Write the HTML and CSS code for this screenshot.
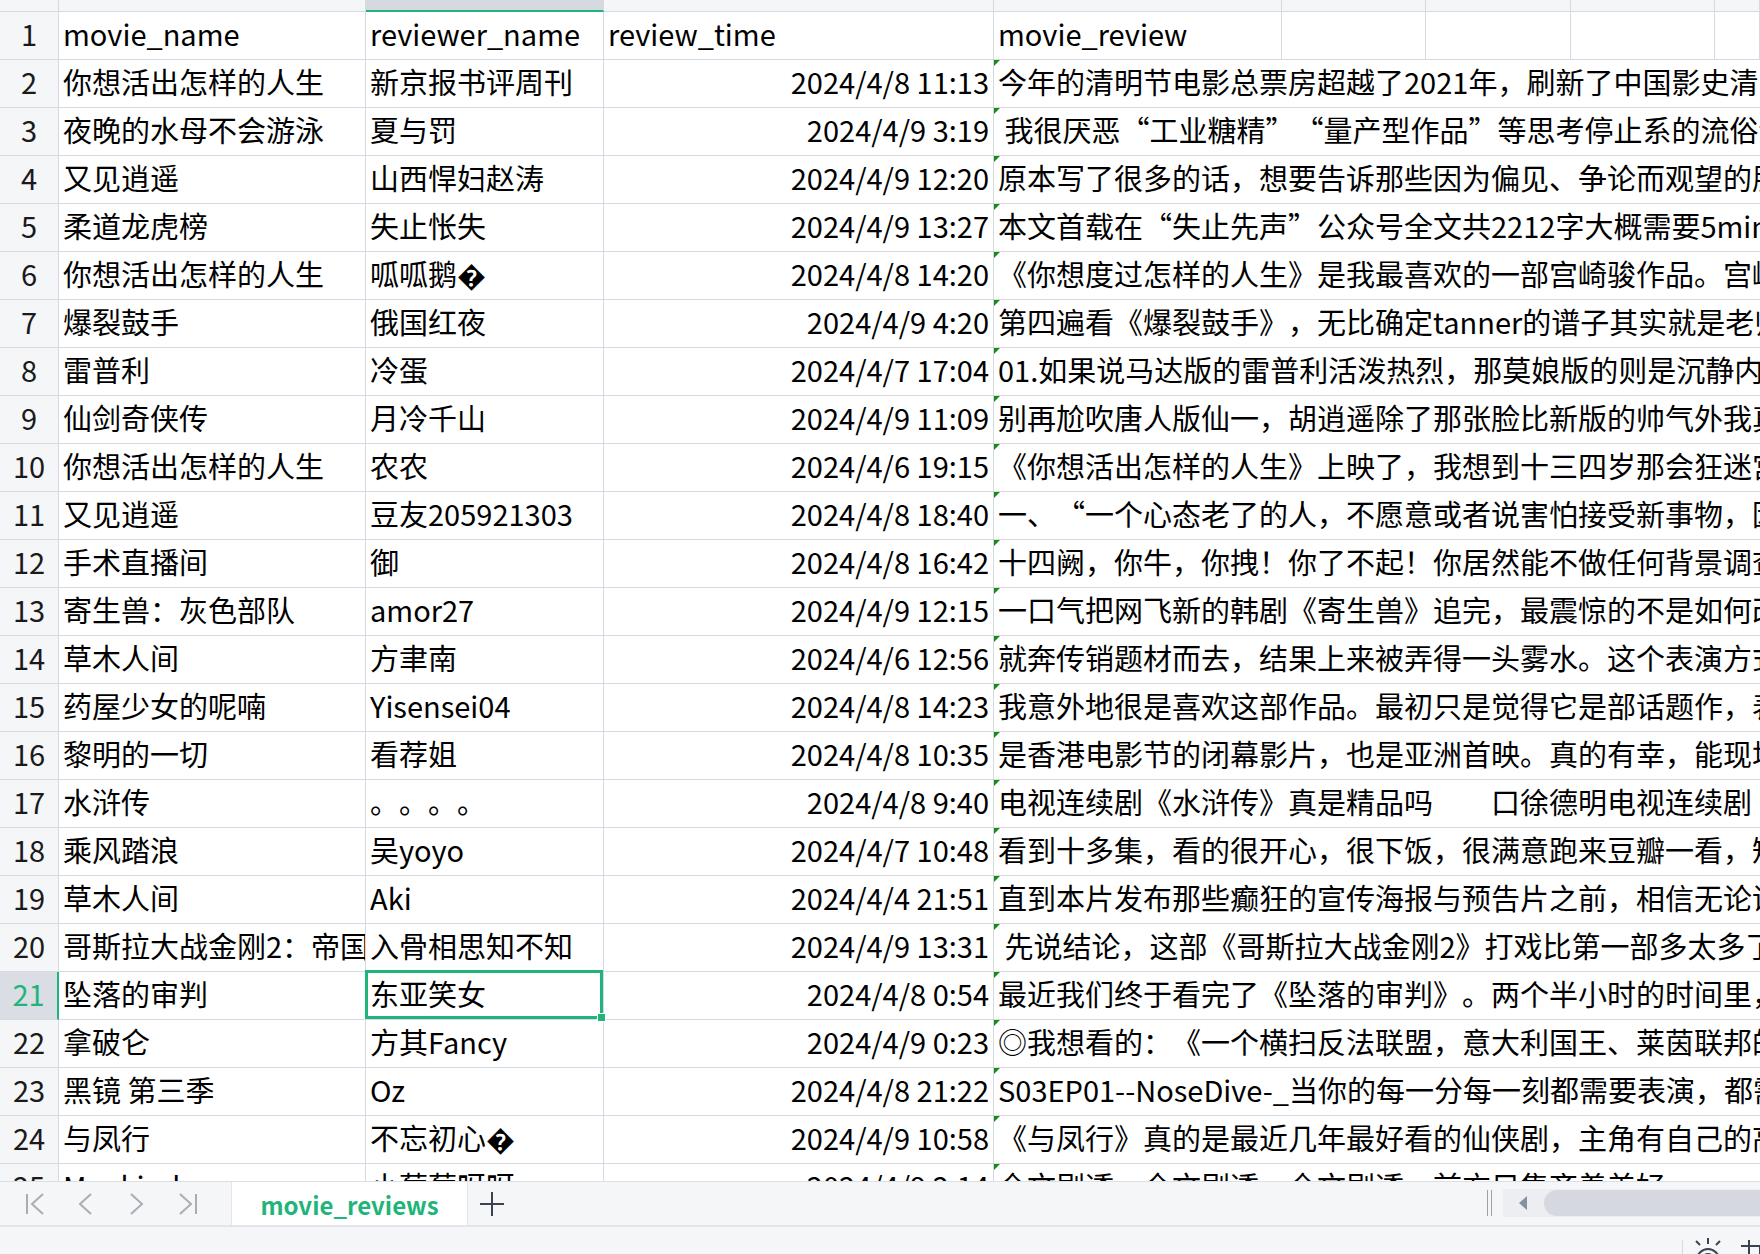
FILE: index.html
```html
<!DOCTYPE html>
<html lang="zh-CN">
<head>
<meta charset="utf-8">
<title>movie_reviews</title>
<link rel="stylesheet" href="styles.css">
</head>
<body>
<div class="sheet">
  <div class="grid">
    <div class="ch"></div><div class="ch"></div><div class="ch on"></div><div class="ch"></div><div class="ch"></div><div class="ch"></div><div class="ch"></div><div class="ch"></div><div class="ch"></div>

    <div class="rh">1</div><div class="c">movie_name</div><div class="c">reviewer_name</div><div class="c">review_time</div><div class="c">movie_review</div><div class="c"></div><div class="c"></div><div class="c"></div><div class="c"></div>

    <div class="rh">2</div><div class="c">你想活出怎样的人生</div><div class="c">新京报书评周刊</div><div class="c r">2024/4/8 11:13</div><div class="c d">今年的清明节电影总票房超越了2021年，刷新了中国影史清明档票房纪录</div>
    <div class="rh">3</div><div class="c">夜晚的水母不会游泳</div><div class="c">夏与罚</div><div class="c r">2024/4/9 3:19</div><div class="c d">&nbsp;我很厌恶“工业糖精”“量产型作品”等思考停止系的流俗评价</div>
    <div class="rh">4</div><div class="c">又见逍遥</div><div class="c">山西悍妇赵涛</div><div class="c r">2024/4/9 12:20</div><div class="c d">原本写了很多的话，想要告诉那些因为偏见、争论而观望的朋友们</div>
    <div class="rh">5</div><div class="c">柔道龙虎榜</div><div class="c">失止怅失</div><div class="c r">2024/4/9 13:27</div><div class="c d">本文首载在“失止先声”公众号全文共2212字大概需要5min阅读</div>
    <div class="rh">6</div><div class="c">你想活出怎样的人生</div><div class="c">呱呱鹅�</div><div class="c r">2024/4/8 14:20</div><div class="c d">《你想度过怎样的人生》是我最喜欢的一部宫崎骏作品。宫崎骏</div>
    <div class="rh">7</div><div class="c">爆裂鼓手</div><div class="c">俄国红夜</div><div class="c r">2024/4/9 4:20</div><div class="c d">第四遍看《爆裂鼓手》，无比确定tanner的谱子其实就是老师拿走的</div>
    <div class="rh">8</div><div class="c">雷普利</div><div class="c">冷蛋</div><div class="c r">2024/4/7 17:04</div><div class="c d">01.如果说马达版的雷普利活泼热烈，那莫娘版的则是沉静内敛</div>
    <div class="rh">9</div><div class="c">仙剑奇侠传</div><div class="c">月冷千山</div><div class="c r">2024/4/9 11:09</div><div class="c d">别再尬吹唐人版仙一，胡逍遥除了那张脸比新版的帅气外我真的</div>
    <div class="rh">10</div><div class="c">你想活出怎样的人生</div><div class="c">农农</div><div class="c r">2024/4/6 19:15</div><div class="c d">《你想活出怎样的人生》上映了，我想到十三四岁那会狂迷宫崎骏</div>
    <div class="rh">11</div><div class="c">又见逍遥</div><div class="c">豆友205921303</div><div class="c r">2024/4/8 18:40</div><div class="c d">一、“一个心态老了的人，不愿意或者说害怕接受新事物，因为</div>
    <div class="rh">12</div><div class="c">手术直播间</div><div class="c">御</div><div class="c r">2024/4/8 16:42</div><div class="c d">十四阙，你牛，你拽！你了不起！你居然能不做任何背景调查</div>
    <div class="rh">13</div><div class="c">寄生兽：灰色部队</div><div class="c">amor27</div><div class="c r">2024/4/9 12:15</div><div class="c d">一口气把网飞新的韩剧《寄生兽》追完，最震惊的不是如何改编</div>
    <div class="rh">14</div><div class="c">草木人间</div><div class="c">方聿南</div><div class="c r">2024/4/6 12:56</div><div class="c d">就奔传销题材而去，结果上来被弄得一头雾水。这个表演方式</div>
    <div class="rh">15</div><div class="c">药屋少女的呢喃</div><div class="c">Yisensei04</div><div class="c r">2024/4/8 14:23</div><div class="c d">我意外地很是喜欢这部作品。最初只是觉得它是部话题作，表现</div>
    <div class="rh">16</div><div class="c">黎明的一切</div><div class="c">看荐姐</div><div class="c r">2024/4/8 10:35</div><div class="c d">是香港电影节的闭幕影片，也是亚洲首映。真的有幸，能现场看</div>
    <div class="rh">17</div><div class="c">水浒传</div><div class="c">。。。。</div><div class="c r">2024/4/8 9:40</div><div class="c d">电视连续剧《水浒传》真是精品吗　　口徐德明电视连续剧《水浒传》</div>
    <div class="rh">18</div><div class="c">乘风踏浪</div><div class="c">吴yoyo</div><div class="c r">2024/4/7 10:48</div><div class="c d">看到十多集，看的很开心，很下饭，很满意跑来豆瓣一看，短评</div>
    <div class="rh">19</div><div class="c">草木人间</div><div class="c">Aki</div><div class="c r">2024/4/4 21:51</div><div class="c d">直到本片发布那些癫狂的宣传海报与预告片之前，相信无论谁</div>
    <div class="rh">20</div><div class="c">哥斯拉大战金刚2：帝国崛起</div><div class="c">入骨相思知不知</div><div class="c r">2024/4/9 13:31</div><div class="c d">&nbsp;先说结论，这部《哥斯拉大战金刚2》打戏比第一部多太多了</div>
    <div class="rh on">21</div><div class="c">坠落的审判</div><div class="c sel">东亚笑女</div><div class="c r">2024/4/8 0:54</div><div class="c d">最近我们终于看完了《坠落的审判》。两个半小时的时间里，</div>
    <div class="rh">22</div><div class="c">拿破仑</div><div class="c">方其Fancy</div><div class="c r">2024/4/9 0:23</div><div class="c d">◎我想看的：《一个横扫反法联盟，意大利国王、莱茵联邦的</div>
    <div class="rh">23</div><div class="c">黑镜 第三季</div><div class="c">Oz</div><div class="c r">2024/4/8 21:22</div><div class="c d">S03EP01--NoseDive-_当你的每一分每一刻都需要表演，都需要</div>
    <div class="rh">24</div><div class="c">与凤行</div><div class="c">不忘初心�</div><div class="c r">2024/4/9 10:58</div><div class="c d">《与凤行》真的是最近几年最好看的仙侠剧，主角有自己的高光</div>
    <div class="rh">25</div><div class="c">Mankind</div><div class="c">小莓莓呀呀</div><div class="c r">2024/4/9 2:14</div><div class="c d">全文剧透，全文剧透，全文剧透，前方只集齐着美好</div>
  </div>
</div>

<div class="tabbar">
  <div class="nav">
    <svg class="ico" width="20" height="24" viewBox="0 0 20 24"><path d="M2 2V22M18 2L7 12L18 22" fill="none" stroke="#a9adb5" stroke-width="2"/></svg>
    <svg class="ico" width="20" height="24" viewBox="0 0 20 24"><path d="M15 2L4 12L15 22" fill="none" stroke="#a9adb5" stroke-width="2"/></svg>
    <svg class="ico" width="20" height="24" viewBox="0 0 20 24"><path d="M4 2L15 12L4 22" fill="none" stroke="#a9adb5" stroke-width="2"/></svg>
    <svg class="ico" width="20" height="24" viewBox="0 0 20 24"><path d="M2 2L13 12L2 22M18 2V22" fill="none" stroke="#a9adb5" stroke-width="2"/></svg>
  </div>
  <div class="tab">movie_reviews</div>
  <div class="add"><svg width="26" height="26" viewBox="0 0 26 26"><path d="M13 1V25M1 13H25" fill="none" stroke="#3c4252" stroke-width="2"/></svg></div>
  <div class="spacer"></div>
  <div class="split"></div>
  <div class="track">
    <svg class="arrow" width="10" height="14" viewBox="0 0 10 14"><path d="M9 0V14L1 7Z" fill="#8790a0"/></svg>
    <div class="thumb"></div>
  </div>
</div>

<div class="status">
  <div class="sep"></div>
  <svg class="sun" width="34" height="30" viewBox="0 0 34 30"><g fill="none" stroke="#3c4252" stroke-width="2"><path d="M17 2V8M5 5L9 9M29 5L25 9"/><circle cx="17" cy="24" r="11"/><circle cx="17" cy="24" r="6"/></g></svg>
  <svg class="lay" width="22" height="30" viewBox="0 0 22 30"><g fill="none" stroke="#3c4252" stroke-width="2"><path d="M11 4V30M3 10H22V30"/></g></svg>
</div>
</body>
</html>
```

FILE: styles.css
```css
* { box-sizing: border-box; }
html, body { margin: 0; padding: 0; }
body {
  width: 1760px;
  height: 1254px;
  overflow: hidden;
  background: #ffffff;
  color: #000000;
  font-family: "Noto Sans CJK SC", "Noto Sans", sans-serif;
  text-spacing-trim: space-all;
  display: flex;
  flex-direction: column;
}
.sheet {
  flex: none;
  height: 1181px;
  overflow: hidden;
}
.grid {
  display: grid;
  grid-template-columns: 59px 307px 238px 390px 288px 144px 145px 144px 1fr;
  grid-template-rows: 12px;
  grid-auto-rows: 48px;
}
.ch {
  background: #f5f6f8;
  border-right: 1px solid #d5d9e1;
  border-bottom: 1px solid #d5d9e1;
}
.ch.on {
  background: #d5d9e0;
  border-bottom: 2px solid #1fb57a;
}
.rh {
  background: #f5f6f8;
  border-right: 1px solid #d5d9e1;
  border-bottom: 1px solid #d5d9e1;
  text-align: center;
  font-size: 29px;
  line-height: 43px;
  padding-bottom: 4px;
  color: #1a1a1a;
}
.rh.on {
  background: #dadde3;
  color: #1fb57a;
  border-right: 2px solid #1fb57a;
}
.c {
  border-right: 1px solid #d5d9e1;
  border-bottom: 1px solid #d5d9e1;
  font-size: 29px;
  line-height: 43px;
  padding: 0 4px 4px;
  white-space: nowrap;
  overflow: hidden;
}
.c.r { text-align: right; }
.c.d {
  grid-column: 5 / -1;
  border-right: none;
  position: relative;
}
.c.d::before {
  content: "";
  position: absolute;
  left: 0;
  top: 0;
  border-top: 6px solid #178a17;
  border-right: 6px solid transparent;
}
.c.sel {
  position: relative;
  overflow: visible;
  z-index: 2;
}
.c.sel::after {
  content: "";
  position: absolute;
  left: -1px;
  top: -2px;
  right: 0;
  bottom: 0;
  border: 3px solid #1fb57a;
  pointer-events: none;
}
.c.sel::before {
  content: "";
  position: absolute;
  right: -3px;
  bottom: -3px;
  width: 7px;
  height: 7px;
  background: #1fb57a;
  border: 1px solid #ffffff;
  z-index: 3;
}

.tabbar {
  flex: none;
  height: 46px;
  display: flex;
  align-items: stretch;
  background: #f5f6f8;
  border-top: 1px solid #dcdfe4;
  border-bottom: 2px solid #e3e5ea;
}
.nav {
  width: 231px;
  display: flex;
  align-items: center;
  padding-left: 25px;
  gap: 31px;
}
.ico { display: block; }
.tab {
  width: 237px;
  background: #ffffff;
  border-left: 1px solid #e2e5ea;
  border-right: 1px solid #e2e5ea;
  display: flex;
  align-items: center;
  justify-content: center;
  color: #1fb57a;
  font-weight: 700;
  font-size: 24px;
  padding-top: 2px;
}
.add {
  display: flex;
  align-items: center;
  padding-left: 11px;
}
.spacer { flex: 1; }
.split {
  width: 16px;
  margin: 8px 0 9px;
  border-left: 1px solid #9ba2ae;
  position: relative;
}
.split::after {
  content: "";
  position: absolute;
  left: 3px;
  top: 0;
  bottom: 0;
  border-left: 1px solid #9ba2ae;
}
.track {
  width: 257px;
  margin: 7px 0 8px;
  background: #eceef2;
  display: flex;
  align-items: center;
  padding: 1px 0 1px 15px;
}
.arrow { display: block; }
.thumb {
  flex: 1;
  align-self: stretch;
  margin-left: 16px;
  background: #d5d8df;
  border-radius: 13px 0 0 13px;
}

.status {
  flex: 1;
  background: #f5f6f8;
  display: flex;
  justify-content: flex-end;
  align-items: flex-start;
  padding-top: 9px;
}
.sep {
  width: 1px;
  height: 20px;
  margin-top: 4px;
  background: #d8dbe0;
  margin-right: 8px;
}
.sun { display: block; margin-right: 13px; }
.lay { display: block; }
```
